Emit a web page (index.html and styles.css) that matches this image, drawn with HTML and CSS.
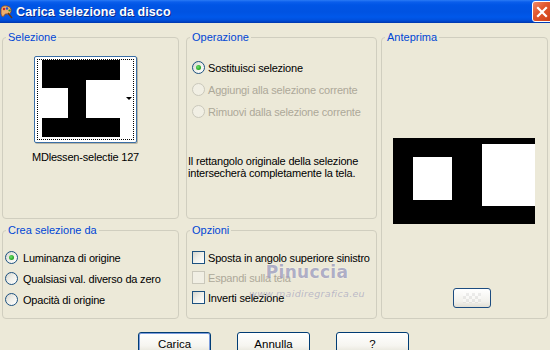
FILE: index.html
```html
<!DOCTYPE html>
<html lang="it">
<head>
<meta charset="utf-8">
<title>Carica selezione da disco</title>
<link rel="stylesheet" href="styles.css">
</head>
<body>
<div class="window">
  <div class="titlebar">
    <svg class="app-icon" width="13" height="16" viewBox="0 0 13 16">
      <path d="M1 5 Q2 1 7 2 Q12 3 11 8 Q10 11 7 10 Q5 9 4 12 Q2 14 1 10 Z" fill="#E9B070" stroke="#8A4A20" stroke-width="0.8"/>
      <circle cx="4" cy="5" r="1.2" fill="#D02020"/>
      <circle cx="7" cy="4.5" r="1.2" fill="#2050D0"/>
      <circle cx="9.5" cy="6.5" r="1.1" fill="#20A030"/>
      <path d="M8 9 L12 14" stroke="#6A3A10" stroke-width="1.4"/>
    </svg>
    <span class="title">Carica selezione da disco</span>
    <div class="close">
      <svg width="12" height="12" viewBox="0 0 12 12"><path d="M2 2 L10 10 M10 2 L2 10" stroke="#fff" stroke-width="2.2" stroke-linecap="square"/></svg>
    </div>
  </div>

  <div class="groups">
    <div class="group g-sel">
      <span class="legend">Selezione</span>
      <div class="sel-body">
        <div class="thumb">
          <div class="thumb-focus">
            <svg class="thumb-img" width="78" height="77" viewBox="0 0 78 77">
              <rect width="78" height="77" fill="#000"/>
              <rect x="0" y="28" width="26" height="30" fill="#fff"/>
              <rect x="44" y="20" width="34" height="38" fill="#fff"/>
            </svg>
            <span class="arrow"></span>
          </div>
        </div>
        <div class="caption">MDlessen-selectie 127</div>
      </div>
    </div>

    <div class="group g-op">
      <span class="legend">Operazione</span>
      <div class="opt-list">
        <div class="opt"><span class="radio checked"></span><span>Sostituisci selezione</span></div>
        <div class="opt disabled"><span class="radio"></span><span>Aggiungi alla selezione corrente</span></div>
        <div class="opt disabled"><span class="radio"></span><span>Rimuovi dalla selezione corrente</span></div>
      </div>
      <p class="desc">Il rettangolo originale della selezione<br>intersecherà completamente la tela.</p>
    </div>

    <div class="group g-prev">
      <span class="legend">Anteprima</span>
      <svg class="preview" width="142" height="86" viewBox="0 0 142 86">
        <rect width="142" height="86" fill="#000"/>
        <rect x="20" y="19" width="39" height="43" fill="#fff"/>
        <rect x="89" y="6" width="53" height="62" fill="#fff"/>
      </svg>
      <div class="mini-btn"><span class="checker"></span></div>
    </div>

    <div class="group g-crea">
      <span class="legend">Crea selezione da</span>
      <div class="opt-list">
        <div class="opt"><span class="radio checked"></span><span>Luminanza di origine</span></div>
        <div class="opt"><span class="radio"></span><span>Qualsiasi val. diverso da zero</span></div>
        <div class="opt"><span class="radio"></span><span>Opacità di origine</span></div>
      </div>
    </div>

    <div class="group g-opz">
      <span class="legend">Opzioni</span>
      <div class="opt-list">
        <div class="opt"><span class="check"></span><span>Sposta in angolo superiore sinistro</span></div>
        <div class="opt disabled"><span class="check"></span><span>Espandi sulla tela</span></div>
        <div class="opt"><span class="check"></span><span>Inverti selezione</span></div>
      </div>
    </div>
  </div>

  <div class="buttons">
    <div class="btn default">Carica</div>
    <div class="btn">Annulla</div>
    <div class="btn">?</div>
  </div>

  <div class="watermark">
    <span class="wm-name">Pinuccia</span>
    <span class="wm-url">www.maidiregrafica.eu</span>
  </div>
</div>
</body>
</html>
```

FILE: styles.css
```css
* { box-sizing: border-box; }

html, body {
  margin: 0;
  padding: 0;
  background: #ECE9D8;
}

body {
  width: 550px;
  height: 350px;
  overflow: hidden;
  font-family: "Liberation Sans", Arial, sans-serif;
  font-size: 11px;
  letter-spacing: -0.2px;
  color: #000;
}

.window {
  position: relative;
  width: 550px;
  height: 350px;
}

/* Title bar */
.titlebar {
  height: 23px;
  display: flex;
  align-items: center;
  background: linear-gradient(#2A7BF5 0px, #0A5EEC 2px, #0055E5 5px, #0053E2 12px, #0058EA 17px, #0050DD 20px, #0040C0 22px, #0035A8 23px);
}

.app-icon {
  flex: none;
}

.title {
  margin-left: 3px;
  color: #fff;
  font-weight: bold;
  font-size: 12.5px;
  text-shadow: 1px 1px 0 #0A2A8C;
  letter-spacing: 0.1px;
}

.close {
  margin-left: auto;
  margin-top: 1px;
  align-self: flex-start;
  width: 21px;
  height: 21px;
  margin-right: -3px;
  border: 1px solid #fff;
  border-radius: 3px;
  background: linear-gradient(135deg, #F08A6A 0%, #E2582F 40%, #CC3E16 100%);
  display: flex;
  align-items: center;
  justify-content: center;
  padding-right: 2px;
}

/* Groups grid */
.groups {
  margin-top: 14px;
  margin-left: 2px;
  display: grid;
  grid-template-columns: 177px 7px 191px 4px 167px;
  grid-template-rows: 182px 89px;
  row-gap: 11px;
}

.group {
  position: relative;
  border: 1px solid #D0CEBF;
  border-radius: 4px;
}

.legend {
  position: absolute;
  top: -7px;
  left: 3px;
  padding: 0 2px;
  line-height: 13px;
  background: #ECE9D8;
  color: #0046D5;
  letter-spacing: 0;
}

.g-sel { grid-column: 1; grid-row: 1; }
.g-op { grid-column: 3; grid-row: 1; }
.g-prev { grid-column: 5; grid-row: 1 / span 2; }
.g-crea { grid-column: 1; grid-row: 2; }
.g-opz { grid-column: 3; grid-row: 2; }

/* Selezione */
.sel-body {
  width: 165px;
  padding-top: 18px;
  display: flex;
  flex-direction: column;
  align-items: center;
}

.thumb {
  width: 103px;
  height: 87px;
  border: 1px solid #3A6EA5;
  border-radius: 2px;
  background: #fff;
  padding: 2px;
  box-shadow: 1px 1px 0 #B8B5A5;
}

.thumb-focus {
  width: 100%;
  height: 100%;
  border: 1px dotted #000;
  display: flex;
  align-items: center;
  padding-left: 4px;
}

.thumb-img {
  align-self: flex-start;
  display: block;
}

.arrow {
  margin-left: auto;
  margin-right: 1px;
  width: 0;
  height: 0;
  border-left: 3px solid transparent;
  border-right: 3px solid transparent;
  border-top: 3px solid #000;
  margin-top: -2px;
}

.caption {
  margin-top: 8px;
  line-height: 13px;
}

/* Options */
.opt-list {
  display: flex;
  flex-direction: column;
  gap: 9px;
  padding-left: 5px;
}

.opt {
  display: flex;
  align-items: center;
  height: 13px;
  gap: 3px;
  white-space: nowrap;
}

.opt.disabled { color: #ACA899; }

.radio {
  flex: none;
  width: 13px;
  height: 13px;
  border-radius: 50%;
  border: 1px solid #1C5180;
  background: linear-gradient(135deg, #D6D5CE 0%, #EEEEE8 45%, #FFFFFF 100%);
  display: flex;
  align-items: center;
  justify-content: center;
}

.radio.checked::after {
  content: "";
  width: 5px;
  height: 5px;
  border-radius: 50%;
  background: radial-gradient(circle at 40% 40%, #6CE06A, #21A121 70%);
}

.opt.disabled .radio {
  border-color: #CAC8BB;
  background: #F1EFE4;
}

.check {
  flex: none;
  width: 13px;
  height: 13px;
  border: 1px solid #1C5180;
  background: linear-gradient(135deg, #D6D5CE 0%, #EEEEE8 45%, #FFFFFF 100%);
}

.opt.disabled .check {
  border-color: #CAC8BB;
  background: #F1EFE4;
}

.g-op { padding-top: 23px; }

.desc {
  margin: 37px 0 0 1px;
  line-height: 12px;
}

.g-crea { padding-top: 20px; }
.g-crea .opt-list { gap: 8px; padding-left: 2px; }
.g-crea .opt { gap: 5px; }

.g-opz { padding-top: 20px; }
.g-opz .opt-list { gap: 7px; }

/* Anteprima */
.g-prev {
  padding-top: 100px;
  display: flex;
  flex-direction: column;
  align-items: center;
}

.preview { display: block; margin-left: -2px; }

.mini-btn {
  align-self: flex-start;
  margin-left: 71px;
  margin-top: 64px;
  width: 38px;
  height: 20px;
  border: 1px solid #1C4C80;
  border-radius: 3px;
  background: linear-gradient(#FFFFFF, #F2F1EC 70%, #E2DFD4);
  display: flex;
  align-items: center;
  justify-content: center;
}

.checker {
  width: 18px;
  height: 10px;
  opacity: 0.35;
  background: repeating-conic-gradient(#CFCFCF 0 25%, #FFFFFF 0 50%) 0 0 / 6px 6px;
}

/* Buttons */
.buttons {
  margin-top: 13px;
  margin-left: 138px;
  display: flex;
  gap: 26px;
}

.btn {
  width: 73px;
  height: 23px;
  border: 1px solid #003C74;
  border-radius: 3px;
  background: linear-gradient(#FFFFFF 0%, #F6F5F0 60%, #E8E6DC 90%, #D8D3C4 100%);
  display: flex;
  align-items: center;
  justify-content: center;
  font-size: 11.5px;
  letter-spacing: 0;
}

.btn.default {
  box-shadow: inset 0 0 0 1px #7C9CDD;
}

/* Watermark overlay */
.watermark {
  position: absolute;
  left: 252px;
  top: 262px;
  width: 110px;
  display: flex;
  flex-direction: column;
  align-items: center;
  pointer-events: none;
}

.wm-name {
  font-family: "DejaVu Sans", sans-serif;
  font-weight: bold;
  font-size: 17px;
  line-height: 20px;
  color: rgba(110, 110, 160, 0.55);
  text-shadow: 0 0 2px rgba(255, 255, 255, 0.8);
  letter-spacing: 0.3px;
}

.wm-url {
  font-family: "DejaVu Sans", sans-serif;
  font-style: italic;
  font-size: 9.5px;
  line-height: 12px;
  margin-top: 6px;
  color: rgba(120, 120, 175, 0.45);
  letter-spacing: 0.3px;
}
```
